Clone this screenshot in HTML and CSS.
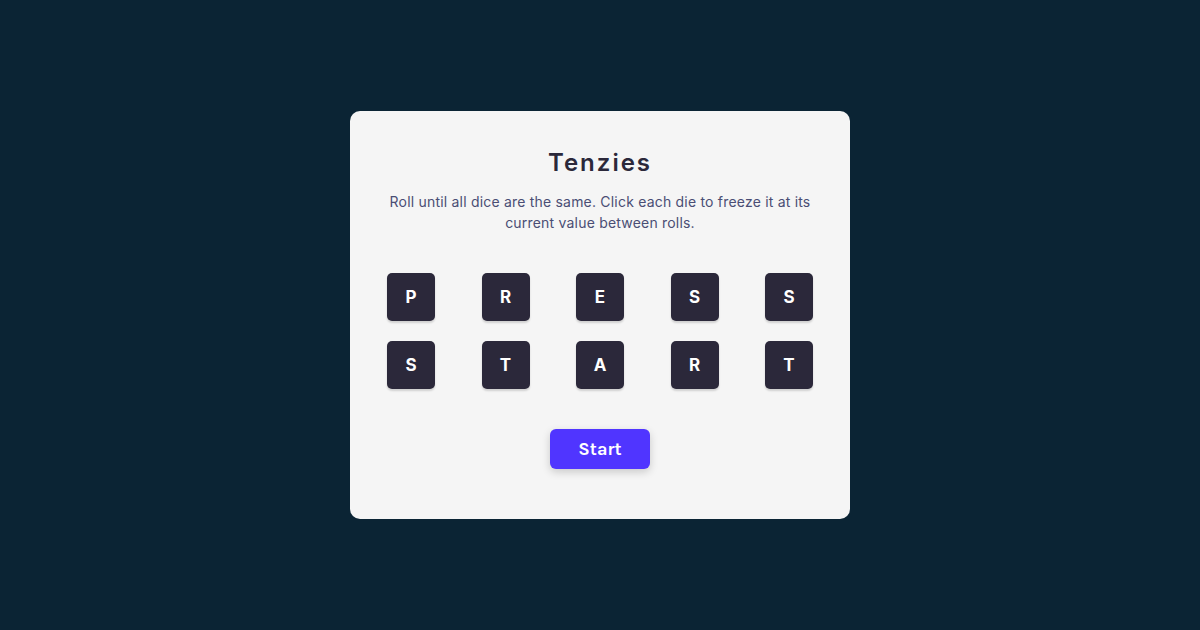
FILE: index.html
```html
<!DOCTYPE html>
<html lang="en">
<head>
<meta charset="utf-8">
<title>Tenzies</title>
<link rel="stylesheet" href="styles.css">
</head>
<body>
<main class="card">
  <h1 class="title">Tenzies</h1>
  <p class="instructions">Roll until all dice are the same. Click each die to freeze it at its current value between rolls.</p>
  <div class="dice">
    <div class="die">P</div>
    <div class="die">R</div>
    <div class="die">E</div>
    <div class="die">S</div>
    <div class="die">S</div>
    <div class="die">S</div>
    <div class="die">T</div>
    <div class="die">A</div>
    <div class="die">R</div>
    <div class="die">T</div>
  </div>
  <button class="start">Start</button>
</main>
</body>
</html>
```

FILE: styles.css
```css
* { box-sizing: border-box; }
html, body { height: 100%; }
body {
  margin: 0;
  background: #0B2434;
  display: flex;
  align-items: center;
  justify-content: center;
  font-family: Inter, "Noto Sans", sans-serif;
}
.card {
  width: 500px;
  height: 408px;
  background: #F5F5F5;
  border-radius: 10px;
  padding: 36px 37px 48px;
  display: flex;
  flex-direction: column;
  align-items: center;
}
.title {
  margin: 0;
  font-size: 24px;
  line-height: 32px;
  font-weight: 600;
  letter-spacing: 2px;
  color: #2B283A;
}
.instructions {
  margin: 12px 0 0;
  width: 426px;
  text-align: center;
  font-size: 14px;
  line-height: 21px;
  letter-spacing: 0.2px;
  color: #4A4E74;
}
.dice {
  margin-top: 40px;
  width: 426px;
  display: grid;
  grid-template-columns: repeat(5, 48px);
  justify-content: space-between;
  row-gap: 20px;
}
.die {
  width: 48px;
  height: 48px;
  background: #2B283A;
  border-radius: 5px;
  box-shadow: 0 2px 2px rgba(0, 0, 0, 0.15);
  color: #FFFFFF;
  font-weight: 700;
  font-size: 17px;
  display: flex;
  align-items: center;
  justify-content: center;
}
.start {
  margin-top: 40px;
  width: 100px;
  height: 40px;
  border: none;
  border-radius: 6px;
  background: #5035FF;
  color: #FFFFFF;
  font-family: Karla, Inter, "Noto Sans", sans-serif;
  font-weight: 700;
  font-size: 18px;
  box-shadow: 0 3px 8px rgba(0, 0, 0, 0.18);
  cursor: pointer;
}
```
